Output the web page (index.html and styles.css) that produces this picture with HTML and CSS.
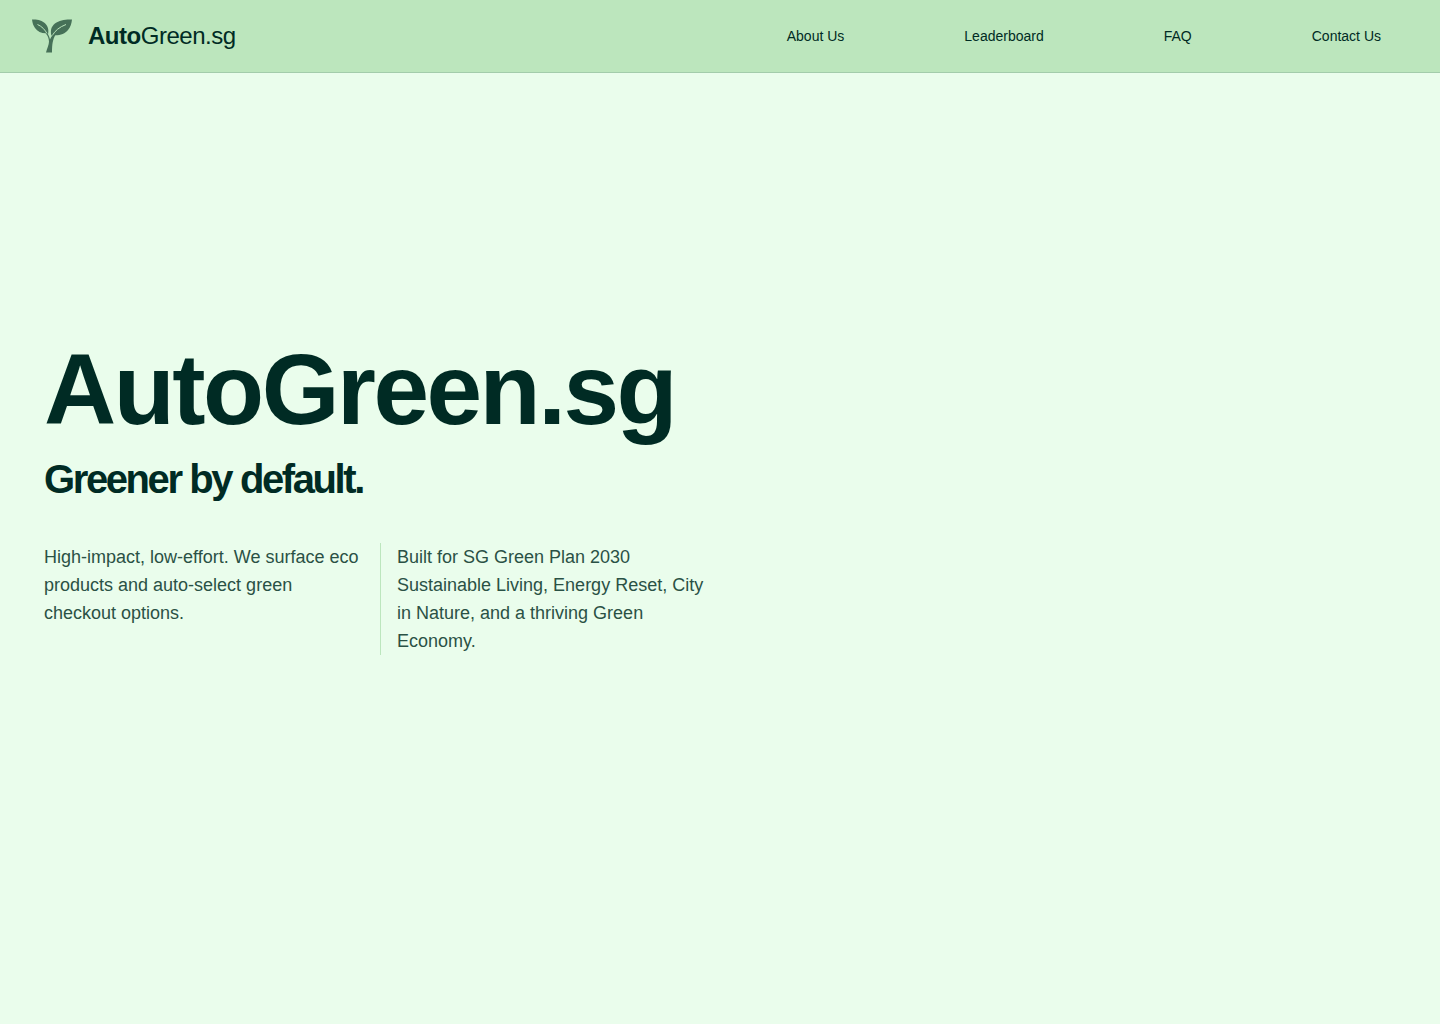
FILE: index.html
```html
<!DOCTYPE html>
<html lang="en">
<head>
  <meta charset="UTF-8">
  <title>AutoGreen.sg</title>
  <meta name="viewport" content="width=device-width, initial-scale=1.0">
  <link rel="stylesheet" href="styles.css">
</head>
<body>

<header class="navbar">
  <a class="brand" href="#">
    <svg class="brand-icon" viewBox="0 0 40 40" aria-hidden="true">
      <!-- leaves -->
      <path d="M0 3.500C5 3.500 9 4 12 6.500C15.500 9 17.200 13 16 18.500L14 17.300C9 17.300 5.500 15.500 3 12C1.200 9.500 .5 7 0 3.500Z"/>
      <path d="M40 3.500C34 3.500 28.500 4 24.500 6.500C20 9.300 18 13 19.300 19.500L22 19.200C28 19.500 33 18 36 14C38.500 11 39.500 7.500 40 3.500Z"/>
      <!-- veins -->
      <path class="vein" d="M5.500 8.500C10 10.500 13 13.500 15.500 18.500"/>
      <path class="vein" d="M34 8.500C27.500 11 23 14.500 20 20"/>
      <!-- stem -->
      <path d="M13.500 17.300L15.600 17.500C17 20 17.600 21.500 18 23.500C18.800 21.800 19.500 20.500 21 18.800L23.500 18.800C20.800 23.500 20 28 20 36.500L14 36.500C15 32 17 29 17 25.500C16.800 22.500 15.800 19.500 13.500 17.300Z"/>
    </svg>
    <span class="brand-name"><b>Auto</b>Green.sg</span>
  </a>
  <nav class="nav-links">
    <a href="#about">About Us</a>
    <a href="#leaderboard">Leaderboard</a>
    <a href="#faq">FAQ</a>
    <a href="#contact">Contact Us</a>
  </nav>
</header>

<main class="hero">
  <h1>AutoGreen.sg</h1>
  <h2>Greener by default.</h2>
  <div class="hero-text">
    <p>High-impact, low-effort. We surface eco products and auto-select green checkout options.</p>
    <p>Built for SG Green Plan 2030 Sustainable Living, Energy Reset, City in Nature, and a thriving Green Economy.</p>
  </div>
</main>

</body>
</html>
```
FILE: styles.css
```css
* {
  font-family: 'Liberation Sans', Arial, sans-serif;
  box-sizing: border-box;
}

body {
  margin: 0;
  min-height: 100vh;
  display: flex;
  flex-direction: column;
  background-color: #eafdec;
  color: #002b24;
}

a {
  color: inherit;
  text-decoration: none;
}

.navbar {
  display: flex;
  justify-content: space-between;
  align-items: center;
  padding: 16px 59px 16px 32px;
  background-color: #bce6bd;
  border-bottom: 1px solid #a3ccab;
}

.brand {
  display: flex;
  align-items: center;
  gap: 16px;
}

.brand-icon {
  width: 40px;
  height: 40px;
  fill: #467158;
}

.brand-icon .vein {
  fill: none;
  stroke: #bce6bd;
  stroke-width: 1;
}

.brand-name {
  font-size: 24px;
  line-height: 32px;
  letter-spacing: -0.02em;
}

.nav-links {
  display: flex;
  gap: 120px;
  font-size: 14px;
  line-height: 20px;
}

.nav-links a:hover {
  text-decoration: underline;
}

.hero {
  flex: 1;
  display: flex;
  flex-direction: column;
  justify-content: center;
  padding: 0 44px 104px;
}

h1, h2, p {
  margin: 0;
}

h1 {
  font-size: 100px;
  line-height: 100px;
  letter-spacing: -0.025em;
}

h2 {
  margin-top: 16px;
  font-size: 40px;
  line-height: 48px;
  letter-spacing: -0.06em;
}

.hero-text {
  display: grid;
  grid-template-columns: 1fr 1fr;
  max-width: 672px;
  margin-top: 40px;
  font-size: 18px;
  line-height: 28px;
  color: #2a5145;
}

.hero-text p:first-child {
  padding-right: 16px;
}

.hero-text p:last-child {
  padding-left: 16px;
  border-left: 1px solid #bce6bd;
}

@media (max-width: 800px) {
  .nav-links {
    gap: 24px;
  }

  h1 {
    font-size: 56px;
    line-height: 64px;
  }
}
```
